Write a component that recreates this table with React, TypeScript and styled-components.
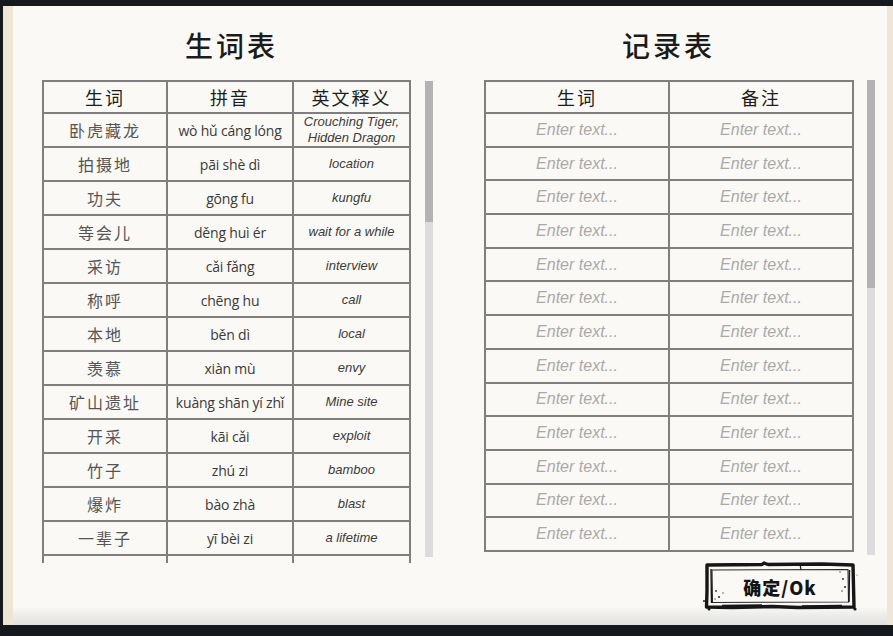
import React from "react";
import styled, { createGlobalStyle } from "styled-components";

const Global = createGlobalStyle`
  html, body { margin: 0; padding: 0; background: #15181c; }
  body { width: 893px; height: 636px; overflow: hidden; font-family: "Noto Sans", "Noto Sans CJK SC", sans-serif; }
  * { box-sizing: border-box; }
`;

const Stage = styled.div`
  width: 893px;
  height: 636px;
  padding: 6px 0 0 3px;
  background: #15181c;
`;

const Paper = styled.div`
  width: 890px;
  height: 619px;
  background: linear-gradient(180deg, #faf9f5 0%, #faf9f5 97%, #ececea 98.5%, #e2e2e0 100%);
  border-left: 10px solid #efe5d4;
  border-right: 6px solid #efe6d8;
  display: flex;
  flex-direction: row;
`;

const Panel = styled.div<{ $ml: number }>`
  margin-left: ${(p) => p.$ml}px;
  width: 391px;
  display: flex;
  flex-direction: column;
`;

const Title = styled.h1<{ $shift: number }>`
  margin: 0;
  width: 369px;
  height: 74px;
  padding: 20px 0 0 ${(p) => p.$shift}px;
  font-family: "Noto Sans CJK SC", sans-serif;
  font-weight: 500;
  font-size: 28px;
  line-height: 38px;
  letter-spacing: 3px;
  color: #1b1b1b;
  text-align: center;
`;

const TableRow = styled.div`
  display: flex;
  flex-direction: row;
  align-items: flex-start;
`;

const Clip = styled.div<{ $w: number; $h: number }>`
  width: ${(p) => p.$w}px;
  height: ${(p) => p.$h}px;
  overflow: hidden;
  flex: none;
`;

const Grid = styled.div<{ $cols: string; $rowH: number }>`
  display: grid;
  grid-template-columns: ${(p) => p.$cols};
  grid-template-rows: 32px;
  grid-auto-rows: ${(p) => p.$rowH}px;
  border-top: 2px solid #7f7f7f;
  border-left: 2px solid #7f7f7f;
`;

const Cell = styled.div<{ $kind: "head" | "zh" | "py" | "en" | "ph" }>`
  border-right: 2px solid #7f7f7f;
  border-bottom: 2px solid #7f7f7f;
  display: flex;
  align-items: center;
  justify-content: center;
  text-align: center;
  overflow: hidden;
  ${(p) =>
    p.$kind === "head"
      ? `font-family: "Noto Sans CJK SC", sans-serif; font-size: 18px; font-weight: 400; color: #1e1e1e; letter-spacing: 2px;`
      : p.$kind === "zh"
      ? `font-family: "Noto Sans CJK SC", sans-serif; font-size: 16px; font-weight: 400; color: #555555; letter-spacing: 2px;`
      : p.$kind === "py"
      ? `font-family: "Open Sans", "Noto Sans", sans-serif; font-size: 14px; color: #3a3a3a; letter-spacing: -0.2px;`
      : p.$kind === "en"
      ? `font-family: "Liberation Sans", Arial, sans-serif; font-style: italic; font-size: 13px; line-height: 16px; color: #3a3a3a;`
      : `font-family: "Liberation Sans", Arial, sans-serif; font-style: italic; font-size: 16px; color: #a9a9a9;`}
`;

const Track = styled.div<{ $ml: number; $mt: number; $h: number }>`
  margin-left: ${(p) => p.$ml}px;
  margin-top: ${(p) => p.$mt}px;
  width: 8px;
  height: ${(p) => p.$h}px;
  background: #dcdcdc;
  flex: none;
  display: flex;
  flex-direction: column;
`;

const Thumb = styled.div<{ $h: number }>`
  height: ${(p) => p.$h}px;
  background: #b3b3b3;
`;

const Footer = styled.div`
  display: flex;
  justify-content: flex-end;
  padding-right: 20px;
  margin-top: 8px;
`;

const OkButton = styled.button`
  position: relative;
  width: 150px;
  height: 45px;
  border: none;
  background: transparent;
  padding: 0;
  cursor: pointer;
  font-family: "Noto Sans CJK SC", sans-serif;
  font-weight: 900;
  font-size: 18px;
  color: #141414;
  letter-spacing: 1px;
  display: flex;
  align-items: center;
  justify-content: center;
`;

const Frame = styled.svg`
  position: absolute;
  left: -3px;
  top: -2px;
  width: 156px;
  height: 50px;
  pointer-events: none;
`;

const Label = styled.span`
  position: relative;
  margin-top: 2px;
`;

const words: [string, string, string][] = [
  ["卧虎藏龙", "wò hǔ cáng lóng", "Crouching Tiger,\nHidden Dragon"],
  ["拍摄地", "pāi shè dì", "location"],
  ["功夫", "gōng fu", "kungfu"],
  ["等会儿", "děng huì ér", "wait for a while"],
  ["采访", "cǎi fǎng", "interview"],
  ["称呼", "chēng hu", "call"],
  ["本地", "běn dì", "local"],
  ["羡慕", "xiàn mù", "envy"],
  ["矿山遗址", "kuàng shān yí zhǐ", "Mine site"],
  ["开采", "kāi cǎi", "exploit"],
  ["竹子", "zhú zi", "bamboo"],
  ["爆炸", "bào zhà", "blast"],
  ["一辈子", "yī bèi zi", "a lifetime"],
  ["", "", ""],
];

const Brush = () => (
  <Frame viewBox="0 0 156 50">
    <path
      d="M5 4 L60 3.5 L62 2 L66 3.5 L120 3 L151 4 L151.5 25 L152 46 L96 46.5 L70 45.5 L30 46.5 L4.5 46 L5 30 Z"
      fill="none"
      stroke="#161616"
      strokeWidth="3.4"
      strokeLinejoin="round"
    />
    <path d="M10 9 L146 8.5 L146.5 41 L10.5 41.5 Z" fill="none" stroke="#2a2a2a" strokeWidth="1.1" />
    <path d="M20 45 L60 44.5 M100 45.5 L140 45" stroke="#161616" strokeWidth="2.5" />
    <path d="M9 8 L9.5 42" stroke="#161616" strokeWidth="1.4" />
    <path d="M147.5 9 L147 41" stroke="#161616" strokeWidth="1.4" />
    <path d="M98 3 L99 9" stroke="#161616" strokeWidth="1.2" />
    <circle cx="2" cy="40" r="1" fill="#222" />
    <circle cx="14" cy="30" r="0.9" fill="#333" />
    <circle cx="17" cy="36" r="1.1" fill="#333" />
    <circle cx="21" cy="32" r="0.7" fill="#444" />
    <circle cx="13" cy="38" r="0.7" fill="#444" />
    <circle cx="141" cy="18" r="1" fill="#333" />
    <circle cx="143" cy="26" r="1.1" fill="#333" />
    <circle cx="140" cy="30" r="0.8" fill="#444" />
    <circle cx="138" cy="11" r="0.7" fill="#444" />
    <circle cx="153" cy="48" r="1.6" fill="#161616" />
    <circle cx="7" cy="48" r="1.5" fill="#161616" />
    <circle cx="155" cy="14" r="0.6" fill="#555" />
    <circle cx="44" cy="4" r="1.2" fill="#161616" />
  </Frame>
);

export default function App() {
  return (
    <>
      <Global />
      <Stage>
        <Paper>
          <Panel $ml={29}>
            <Title $shift={10}>生词表</Title>
            <TableRow>
              <Clip $w={369} $h={483}>
                <Grid $cols="124px 126px 117px" $rowH={34}>
                  <Cell $kind="head">生词</Cell>
                  <Cell $kind="head">拼音</Cell>
                  <Cell $kind="head">英文释义</Cell>
                  {words.map(([zh, py, en], i) => (
                    <React.Fragment key={i}>
                      <Cell $kind="zh">{zh}</Cell>
                      <Cell $kind="py">{py}</Cell>
                      <Cell $kind="en">
                        {en.split("\n").map((l, j) => (
                          <React.Fragment key={j}>
                            {j > 0 && <br />}
                            {l}
                          </React.Fragment>
                        ))}
                      </Cell>
                    </React.Fragment>
                  ))}
                </Grid>
              </Clip>
              <Track $ml={14} $mt={1} $h={476}>
                <Thumb $h={141} />
              </Track>
            </TableRow>
          </Panel>
          <Panel $ml={51}>
            <Title $shift={0}>记录表</Title>
            <TableRow>
              <Clip $w={370} $h={475}>
                <Grid $cols="184px 184px" $rowH={33.7}>
                  <Cell $kind="head">生词</Cell>
                  <Cell $kind="head">备注</Cell>
                  {Array.from({ length: 13 }).map((_, i) => (
                    <React.Fragment key={i}>
                      <Cell $kind="ph">Enter text...</Cell>
                      <Cell $kind="ph">Enter text...</Cell>
                    </React.Fragment>
                  ))}
                </Grid>
              </Clip>
              <Track $ml={13} $mt={0} $h={475}>
                <Thumb $h={208} />
              </Track>
            </TableRow>
            <Footer>
              <OkButton type="button">
                <Brush />
                <Label>确定/Ok</Label>
              </OkButton>
            </Footer>
          </Panel>
        </Paper>
      </Stage>
    </>
  );
}
